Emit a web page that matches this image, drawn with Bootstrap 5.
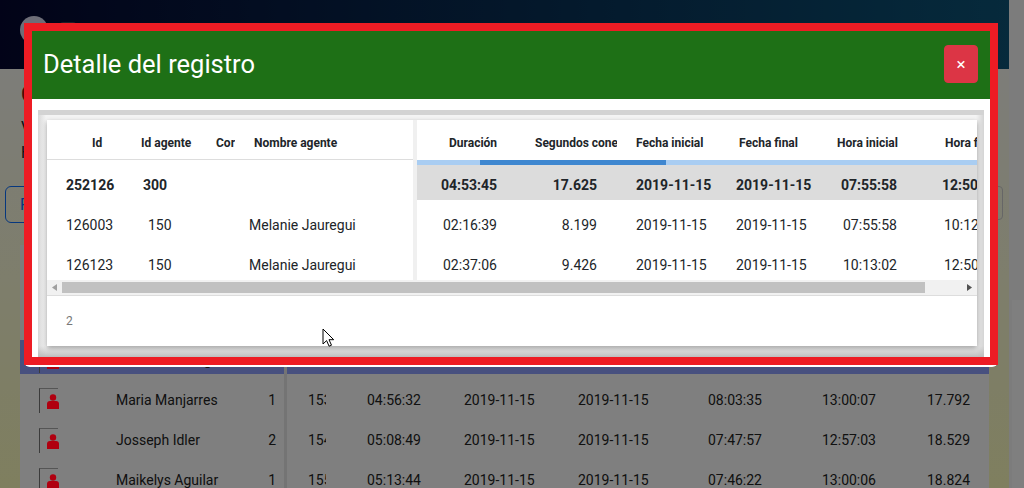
<!DOCTYPE html>
<html lang="es">
<head>
    <meta charset="UTF-8">
    <meta name="viewport" content="width=device-width, initial-scale=1.0">
    <title>Detalle del registro</title>
    <link href="https://cdn.jsdelivr.net/npm/bootstrap@5.3.0/dist/css/bootstrap.min.css" rel="stylesheet">
    <style>
        body {
            font-family: Roboto, "Liberation Sans", sans-serif;
            font-size: 14px;
            overflow: hidden;
            color: #212529;
        }
        /* page behind the modal */
        .page-shell { height: 488px; overflow: hidden; }
        .page-main { width: 1009px; height: 488px; background: linear-gradient(#fafaf2 15%, #fefebe 100%); }
        .page-scroll { width: 15px; background: #f8f8f8; }
        .page-head { height: 69px; background: linear-gradient(90deg, #040730, #0c5478); padding: 16px 20px; gap: 12px; }
        .head-avatar { width: 28px; height: 28px; border-radius: 50%; background: #dcdcf0; }
        .head-name { width: 16px; height: 12px; margin-top: 6px; border-radius: 3px; background: #3c3c50; }
        .page-title { height: 117px; padding: 10px 0 0 21px; }
        .page-title h2 { font-size: 24px; color: #a01010; margin-bottom: 6px; line-height: 30px; }
        .page-title p { font-size: 16px; line-height: 25px; margin: 0; }
        .page-tools { height: 59px; padding: 0 6px 0 5px; }
        .tool-btn { width: 200px; height: 37px; text-align: left; padding-left: 14px; }
        .tool-box { width: 200px; height: 34px; border: 1px solid #ccc; border-radius: 4px; }
        .bg-card { margin: 0 20px; background: #fff; color: #222; }
        .bg-top { height: 95px; background: #fafafa; }
        .bg-row { height: 40px; position: relative; }
        .bg-row-active { background: linear-gradient(#8ea0fe, #8ea0fe) no-repeat; background-size: 100% 34px; }
        .bg-user { width: 19px; height: 25px; margin-left: 19px; border-left: 1px solid #777; border-top: 1px solid #aaa; padding: 5px 0 0 7px; }
        .bg-user svg { display: block; position: relative; z-index: 1052; }
        .bg-name { width: 152px; margin-left: 58px; white-space: nowrap; }
        .bg-num { width: 8px; text-align: right; }
        .bg-split { width: 3px; height: 40px; margin-left: 8px; background: #e8e8e8; }
        .bg-id { width: 18px; margin-left: 21px; overflow: hidden; }
        .bg-time { white-space: nowrap; }
        .bg-gap1 { margin-left: 41px; width: 97px; }
        .bg-gap2 { width: 114px; }
        .bg-gap3 { width: 130px; }
        .bg-gap4 { width: 114px; }
        .bg-gap5 { width: 105px; }
        .bg-gap6 { width: 50px; }
        /* modal */
        .modal-backdrop.show { opacity: .5; }
        .modal-dialog.detail-dialog { max-width: 974px; width: 974px; margin: 23px 0 0 24px; }
        .detail-content { border: 0; border-radius: 0 0 6px 6px; padding-bottom: 2px; background: #fff; }
        .detail-border { border: 8px solid #ed1c24; }
        .detail-head { height: 68px; background: #1e7016; padding: 0 12px 2px 11px; }
        .detail-title { font-size: 25.5px; font-weight: 400; color: #fff; margin: 0; line-height: 30px; }
        .detail-close { width: 34px; height: 38px; padding: 0; font-size: 17px; line-height: 1; border-radius: 4px; }
        .detail-body { padding: 11px 6px 0; }
        .detail-frame {
            background: linear-gradient(0deg, #bdbdbd, rgba(189, 189, 189, 0) 11px), linear-gradient(90deg, #d8d8d8, #f4f4f4 8px, #f4f4f4 calc(100% - 8px), #d4d4d4);
            border-top: 5px solid #d3d3d3;
            padding: 5px 7px 11px 9px;
        }
        .detail-card { background: #fff; box-shadow: 0 2px 5px rgba(0, 0, 0, .35); height: 226px; }
        .grid-wrap { height: 160px; overflow: hidden; }
        .grid-left { width: 366px; flex: none; }
        .grid-split { width: 4px; flex: none; background: #f0f0f0; }
        .grid-right { width: 560px; flex: none; overflow: hidden; }
        .grid-table { table-layout: fixed; margin: 0; border-collapse: collapse; }
        .grid-table th, .grid-table td { padding: 0; overflow: hidden; white-space: nowrap; color: #212529; background: transparent; border: 0; box-shadow: none; }
        .grid-table th { height: 39px; font-size: 12px; font-weight: 700; vertical-align: middle; padding-top: 6px; }
        .grid-table td { height: 40px; font-size: 14px; vertical-align: middle; }
        .grid-left .grid-table { width: 366px; }
        .grid-left .grid-table th { padding-top: 7px; }
        .grid-left .grid-table thead tr { border-bottom: 1px solid #ddd; }
        .grid-left .grid-table tbody tr:first-child td { height: 46px; padding-top: 6px; }
        .grid-right .grid-table { width: 600px; }
        .grid-bar { height: 5px; margin-top: 1px; background: #a9cdf2; }
        .grid-bar-fill { width: 186px; height: 5px; margin-left: 63px; background: #3f87d0; }
        .grid-row-sum { background: linear-gradient(#dcdcdc, #dcdcdc) no-repeat; background-size: 100% 35px; }
        .grid-table .grid-row-sum td { font-weight: 700; }
        .total-row td { font-weight: 700; }
        .cl1 { width: 83px; } .cl2 { width: 82px; } .cl3 { width: 23px; } .cl4 { width: 178px; }
        .cr1 { width: 100px; } .cr2 { width: 100px; } .cr3 { width: 99px; } .cr4 { width: 101px; } .cr5 { width: 100px; } .cr6 { width: 100px; }
        .grid-table .p-id { padding-left: 19px; }
        .grid-table .p-idh { padding-left: 45px; }
        .grid-table .p-ag { padding-left: 18px; }
        .grid-table .p-agt { padding-left: 13px; }
        .grid-table .p-agh { padding-left: 11px; }
        .grid-table .p-coh { padding-left: 4px; }
        .grid-table .p-noh { padding-left: 19px; }
        .grid-table .p-no { padding-left: 14px; }
        .grid-table .r-val { text-align: right; padding-right: 20px; }
        .grid-table .r-h1 { padding-left: 32px; }
        .grid-table .r-h2 { padding-left: 18px; }
        .grid-table .r-date { padding-left: 19px; }
        .grid-table .r-date2 { padding-left: 20px; }
        .grid-table .r-h4 { padding-left: 23px; }
        .grid-table .r-h5 { padding-left: 20px; }
        .grid-table .r-h6 { padding-left: 28px; }
        .grid-table .r-val6 { text-align: right; padding-right: 19px; }
        .grid-scroll { height: 16px; background: #f1f1f1; border-bottom: 1px solid #ddd; padding: 2px 0 0; }
        .scroll-btn { width: 15px; height: 11px; flex: none; }
        .scroll-btn svg { display: block; margin: 2px auto 0; }
        .scroll-thumb { width: 863px; height: 11px; background: #c1c1c1; flex: none; }
        .grid-foot { padding: 18px 0 0 19px; font-size: 12px; color: #777; line-height: 14px; }
        .mouse-arrow { position: fixed; left: 322px; top: 328px; z-index: 1060; display: block; }
        .test-swatch { position: fixed; left: 1012px; top: 300px; width: 12px; height: 188px; background: #7f7f7f; z-index: 2000; }
    </style>
</head>
<body>
    <div class="page-shell d-flex">
        <div class="page-main">
            <div class="page-head d-flex">
                <div class="head-avatar"></div>
                <div class="head-name"></div>
            </div>
            <div class="page-title">
                <h2>Consolidado</h2>
                <p>Ver registros</p>
                <p>Hoy</p>
            </div>
            <div class="page-tools d-flex justify-content-between">
                <button class="btn btn-outline-primary tool-btn">Filtrar</button>
                <div class="tool-box"></div>
            </div>
            <div class="bg-card">
                <div class="bg-top"></div>

                <div class="bg-row bg-row-active d-flex align-items-center">
                    <div class="bg-user"><svg width="12" height="15" viewBox="0 0 12 15"><circle cx="6" cy="3.5" r="3.2" fill="#b00010"/><path d="M0 15V10a3 3 0 0 1 3-3h6a3 3 0 0 1 3 3v5z" fill="#b00010"/></svg></div>
                    <div class="bg-name">Melanie Jauregui</div>
                    <div class="bg-num">1</div>
                    <div class="bg-split"></div>
                </div>

                <div class="bg-row d-flex align-items-center">
                    <div class="bg-user"><svg width="12" height="15" viewBox="0 0 12 15"><circle cx="6" cy="3.5" r="3.2" fill="#b00010"/><path d="M0 15V10a3 3 0 0 1 3-3h6a3 3 0 0 1 3 3v5z" fill="#b00010"/></svg></div>
                    <div class="bg-name">Maria Manjarres</div>
                    <div class="bg-num">1</div>
                    <div class="bg-split"></div>
                    <div class="bg-id">153</div>
                    <div class="bg-time bg-gap1">04:56:32</div>
                    <div class="bg-time bg-gap2">2019-11-15</div>
                    <div class="bg-time bg-gap3">2019-11-15</div>
                    <div class="bg-time bg-gap4">08:03:35</div>
                    <div class="bg-time bg-gap5">13:00:07</div>
                    <div class="bg-time bg-gap6">17.792</div>
                </div>
                <div class="bg-row d-flex align-items-center">
                    <div class="bg-user"><svg width="12" height="15" viewBox="0 0 12 15"><circle cx="6" cy="3.5" r="3.2" fill="#b00010"/><path d="M0 15V10a3 3 0 0 1 3-3h6a3 3 0 0 1 3 3v5z" fill="#b00010"/></svg></div>
                    <div class="bg-name">Josseph Idler</div>
                    <div class="bg-num">2</div>
                    <div class="bg-split"></div>
                    <div class="bg-id">154</div>
                    <div class="bg-time bg-gap1">05:08:49</div>
                    <div class="bg-time bg-gap2">2019-11-15</div>
                    <div class="bg-time bg-gap3">2019-11-15</div>
                    <div class="bg-time bg-gap4">07:47:57</div>
                    <div class="bg-time bg-gap5">12:57:03</div>
                    <div class="bg-time bg-gap6">18.529</div>
                </div>
                <div class="bg-row d-flex align-items-center">
                    <div class="bg-user"><svg width="12" height="15" viewBox="0 0 12 15"><circle cx="6" cy="3.5" r="3.2" fill="#b00010"/><path d="M0 15V10a3 3 0 0 1 3-3h6a3 3 0 0 1 3 3v5z" fill="#b00010"/></svg></div>
                    <div class="bg-name">Maikelys Aguilar</div>
                    <div class="bg-num">1</div>
                    <div class="bg-split"></div>
                    <div class="bg-id">155</div>
                    <div class="bg-time bg-gap1">05:13:44</div>
                    <div class="bg-time bg-gap2">2019-11-15</div>
                    <div class="bg-time bg-gap3">2019-11-15</div>
                    <div class="bg-time bg-gap4">07:46:22</div>
                    <div class="bg-time bg-gap5">13:00:06</div>
                    <div class="bg-time bg-gap6">18.824</div>
                </div>
            </div>
        </div>
        <div class="page-scroll"></div>
    </div>

    <div class="modal-backdrop show"></div>
    <div class="test-swatch"></div>

    <div class="modal d-block">
        <div class="modal-dialog detail-dialog">
            <div class="modal-content detail-content">
                <div class="detail-border">
                    <div class="detail-head d-flex align-items-center justify-content-between">
                        <h5 class="detail-title">Detalle del registro</h5>
                        <button type="button" class="btn btn-danger detail-close">×</button>
                    </div>
                    <div class="detail-body">
                        <div class="detail-frame">
                            <div class="detail-card">
                                <div class="grid-wrap d-flex">
                                    <div class="grid-left">
                                        <table class="table grid-table">
                                            <thead>
                                                <tr>
                                                    <th class="cl1 p-idh">Id</th>
                                                    <th class="cl2 p-agh">Id agente</th>
                                                    <th class="cl3 p-coh">Cor</th>
                                                    <th class="cl4 p-noh">Nombre agente</th>
                                                </tr>
                                            </thead>
                                            <tbody>
                                                <tr class="total-row">
                                                    <td class="p-id">252126</td>
                                                    <td class="p-agt">300</td>
                                                    <td></td>
                                                    <td></td>
                                                </tr>
                                                <tr>
                                                    <td class="p-id">126003</td>
                                                    <td class="p-ag">150</td>
                                                    <td></td>
                                                    <td class="p-no">Melanie Jauregui</td>
                                                </tr>
                                                <tr>
                                                    <td class="p-id">126123</td>
                                                    <td class="p-ag">150</td>
                                                    <td></td>
                                                    <td class="p-no">Melanie Jauregui</td>
                                                </tr>
                                            </tbody>
                                        </table>
                                    </div>
                                    <div class="grid-split"></div>
                                    <div class="grid-right">
                                        <table class="table grid-table">
                                            <thead>
                                                <tr>
                                                    <th class="cr1 r-h1">Duración</th>
                                                    <th class="cr2 r-h2">Segundos conectado</th>
                                                    <th class="cr3 r-date">Fecha inicial</th>
                                                    <th class="cr4 r-h4">Fecha final</th>
                                                    <th class="cr5 r-h5">Hora inicial</th>
                                                    <th class="cr6 r-h6">Hora final</th>
                                                </tr>
                                            </thead>
                                        </table>
                                        <div class="grid-bar"><div class="grid-bar-fill"></div></div>
                                        <table class="table grid-table">
                                            <tbody>
                                                <tr class="grid-row-sum">
                                                    <td class="cr1 r-val">04:53:45</td>
                                                    <td class="cr2 r-val">17.625</td>
                                                    <td class="cr3 r-date">2019-11-15</td>
                                                    <td class="cr4 r-date2">2019-11-15</td>
                                                    <td class="cr5 r-val">07:55:58</td>
                                                    <td class="cr6 r-val6">12:50:03</td>
                                                </tr>
                                                <tr>
                                                    <td class="cr1 r-val">02:16:39</td>
                                                    <td class="cr2 r-val">8.199</td>
                                                    <td class="cr3 r-date">2019-11-15</td>
                                                    <td class="cr4 r-date2">2019-11-15</td>
                                                    <td class="cr5 r-val">07:55:58</td>
                                                    <td class="cr6 r-val6">10:12:37</td>
                                                </tr>
                                                <tr>
                                                    <td class="cr1 r-val">02:37:06</td>
                                                    <td class="cr2 r-val">9.426</td>
                                                    <td class="cr3 r-date">2019-11-15</td>
                                                    <td class="cr4 r-date2">2019-11-15</td>
                                                    <td class="cr5 r-val">10:13:02</td>
                                                    <td class="cr6 r-val6">12:50:08</td>
                                                </tr>
                                            </tbody>
                                        </table>
                                    </div>
                                </div>
                                <div class="grid-scroll d-flex">
                                    <div class="scroll-btn"><svg width="5" height="7" viewBox="0 0 5 7"><path d="M5 0v7L0 3.5z" fill="#a0a0a0"/></svg></div>
                                    <div class="scroll-thumb"></div>
                                    <div class="flex-grow-1"></div>
                                    <div class="scroll-btn"><svg width="5" height="7" viewBox="0 0 5 7"><path d="M0 0v7l5-3.5z" fill="#505050"/></svg></div>
                                </div>
                                <div class="grid-foot">2</div>
                            </div>
                        </div>
                    </div>
                </div>
            </div>
        </div>
    </div>

    <svg class="mouse-arrow" width="13" height="19" viewBox="0 0 13 19"><path d="M1 1v15l3.6-3.4 2.5 5.6 2.4-1-2.5-5.5h4.7z" fill="#fff" stroke="#000" stroke-width="1"/></svg>

    <script src="https://cdn.jsdelivr.net/npm/bootstrap@5.3.0/dist/js/bootstrap.bundle.min.js"></script>
</body>
</html>
